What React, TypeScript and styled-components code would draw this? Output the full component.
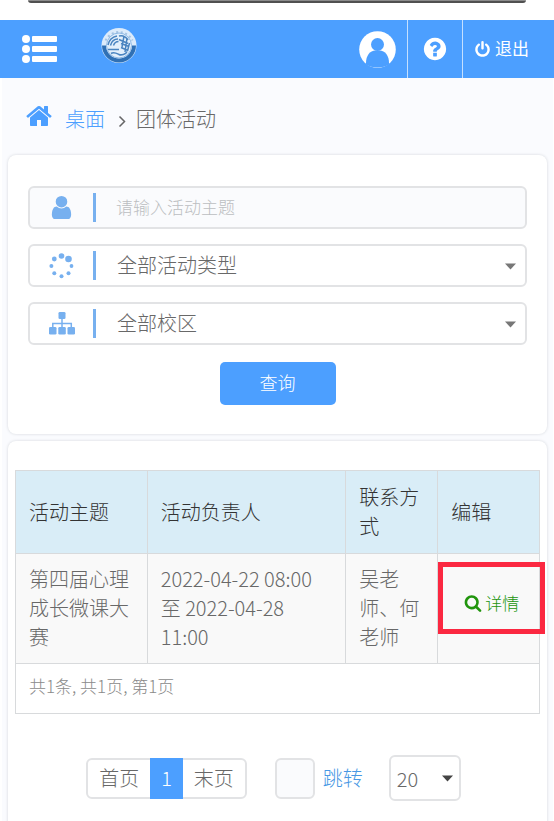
import React from "react";
import styled, { createGlobalStyle, css } from "styled-components";

const blue = "#4c9fff";
const softBlue = "#77b0ef";
const line = "#d8dadc";

const GlobalStyle = createGlobalStyle`
  *, *::before, *::after { box-sizing: border-box; }
  body {
    margin: 0;
    background: #fff;
    color: #686868;
    font-family: "Noto Sans CJK SC", sans-serif;
    font-weight: 300;
    font-size: 20px;
    line-height: 29px;
    overflow-x: hidden;
  }
  button, input, select { font: inherit; color: inherit; margin: 0; }
  a { text-decoration: none; }
`;

const TopStrip = styled.div`
  height: 20px;
  padding: 0 28px;
  &::before {
    content: "";
    display: block;
    height: 3px;
    background: linear-gradient(#8c8c8c 0 33%, #505050 34% 100%);
    border-radius: 0 0 4px 4px;
  }
`;

const Header = styled.header`
  display: flex;
  align-items: stretch;
  height: 58px;
  background: ${blue};
  color: #fff;
`;

const MenuButton = styled.button`
  display: flex;
  align-items: center;
  padding: 0 0 0 22px;
  border: 0;
  background: none;
`;

const Brand = styled.a`
  display: flex;
  align-items: flex-start;
  padding-top: 7px;
  margin: 0 auto 0 44px;
`;

const HeaderLink = styled.a<{ $divided?: boolean; $pad: number }>`
  display: flex;
  align-items: center;
  gap: 4px;
  padding: 0 ${(p) => p.$pad}px;
  color: #fff;
  font-size: 17px;
  ${(p) => p.$divided && css`border-left: 1px solid #c5e0ff;`}
`;

const LogoutText = styled.span`
  padding: 0 14px 3px 0;
  font-weight: 400;
`;

const Main = styled.main`
  margin: 0 1px 0 2px;
  padding: 0 6px;
  background: #fafbfe;
`;

const Breadcrumb = styled.nav`
  display: flex;
  align-items: center;
  height: 77px;
  padding: 4px 19px 0 18px;
  a { display: flex; align-items: center; color: ${blue}; }
  a:first-child { margin: 0 11px 6px 0; }
  svg.chevron { margin: 6px 10px 0 13px; }
`;

const Card = styled.section`
  background: #fff;
  border-radius: 8px;
  box-shadow: 0 0 3px rgba(60, 70, 80, 0.2);
  margin-bottom: 7px;
`;

const SearchForm = styled.form`
  display: flex;
  flex-direction: column;
  gap: 15px;
  padding: 31px 20px 29px;
`;

const Field = styled.label<{ $tinted?: boolean }>`
  position: relative;
  display: flex;
  align-items: center;
  height: 43px;
  border: 2px solid #e2e3e5;
  border-radius: 6px;
  background: ${(p) => (p.$tinted ? "#fafbfd" : "#fff")};
`;

const FieldIcon = styled.span`
  display: flex;
  justify-content: center;
  width: 66px;
  height: 29px;
  align-items: center;
  border-right: 3px solid ${softBlue};
  color: ${softBlue};
  flex: none;
`;

const control = css`
  flex: 1;
  min-width: 0;
  height: 100%;
  border: 0;
  outline: 0;
  background: none;
  appearance: none;
`;

const TextInput = styled.input`
  ${control}
  padding: 0 20px 2px;
  font-size: 17px;
  &::placeholder { color: #bcbec1; opacity: 1; }
`;

const Select = styled.select`
  ${control}
  padding: 0 30px 3px 21px;
`;

const Caret = styled.svg`
  position: absolute;
  right: 8px;
  top: 50%;
  margin-top: -3px;
  pointer-events: none;
`;

const Submit = styled.button`
  align-self: center;
  width: 116px;
  height: 43px;
  margin-top: 2px;
  padding: 0 0 3px;
  border: 0;
  border-radius: 5px;
  background: ${blue};
  color: #fff;
  font-size: 18px;
`;

const ResultCard = styled(Card)`
  padding: 29px 7px 40px;
  margin-bottom: 0;
  border-radius: 8px 8px 0 0;
`;

const Table = styled.table`
  width: 100%;
  table-layout: fixed;
  border-collapse: collapse;
  border: 1px solid ${line};
  th, td { border: 1px solid ${line}; text-align: left; font-weight: 300; }
  th { padding: 11px 13px 13px; background: #d9edf7; color: #333; }
  tbody td { padding: 10px 13px 12px; background: #f9f9f9; }
  tfoot td { padding: 7px 13px 13px; font-size: 17px; color: #8a8a8a; }
`;

const Col = styled.col<{ $share: number }>`
  width: ${(p) => p.$share}%;
`;

const ActionCell = styled.td`
  position: relative;
  &&& { padding: 10px 12px 22px 26px; }
`;

const DetailLink = styled.a`
  display: flex;
  align-items: center;
  gap: 3px;
  color: #21950d;
  font-size: 17px;
  white-space: nowrap;
`;

const Highlight = styled.span`
  position: absolute;
  inset: 8px -6px 29px 0;
  border: 5px solid #fb2841;
  pointer-events: none;
`;

const Pagination = styled.nav`
  display: flex;
  align-items: center;
  justify-content: center;
  height: 46px;
  margin-top: 41px;
  padding-right: 8px;
`;

const Pages = styled.div`
  display: flex;
  height: 41px;
  border: 2px solid #e2e3e5;
  border-radius: 6px;
`;

const PageButton = styled.button<{ $active?: boolean }>`
  padding: 0 11px 2px;
  border: 0;
  background: none;
  ${(p) => p.$active && css`
    margin: -2px 0;
    background: ${blue};
    color: #fff;
  `}
`;

const PageInput = styled.input`
  width: 40px;
  height: 41px;
  margin: 0 8px 0 28px;
  border: 2px solid #e2e3e5;
  border-radius: 6px;
  background: #fafbfd;
`;

const Jump = styled.button`
  padding: 0 0 2px;
  border: 0;
  background: none;
  color: #4898e4;
`;

const SizePicker = styled.label`
  position: relative;
  display: flex;
  width: 72px;
  height: 46px;
  margin-left: 26px;
  border: 2px solid #e2e3e5;
  border-radius: 6px;
  select { padding: 0 0 0 6px; width: 100%; }
  svg { right: 5px; }
`;

const Glyph = ({ d, size }: { d: string; size: number }) => (
  <svg width={size} height={size} viewBox="0 0 1792 1792" fill="currentColor" aria-hidden="true">
    <path d={d} />
  </svg>
);

const homePath =
  "M1408 992v480q0 26-19 45t-45 19h-384v-384h-256v384h-384q-26 0-45-19t-19-45v-480q0-1 .5-3t.5-3l575-474 575 474q1 2 1 6zm223-69l-62 74q-8 9-21 11h-3q-13 0-21-7l-692-577-692 577q-12 8-24 7-13-2-21-11l-62-74q-8-10-7-23.5t11-21.5l719-599q32-26 76-26t76 26l244 204v-195q0-14 9-23t23-9h192q14 0 23 9t9 23v408l219 182q10 8 11 21.5t-7 23.5z";
const questionPath =
  "M1024 1376v-192q0-14-9-23t-23-9h-192q-14 0-23 9t-9 23v192q0 14 9 23t23 9h192q14 0 23-9t9-23zm256-672q0-88-55.5-163t-138.5-116-170-41q-243 0-371 213-15 24 8 42l132 100q7 6 19 6 16 0 25-12 53-68 86-92 34-24 86-24 48 0 85.5 26t37.5 59q0 38-20 61t-68 45q-63 28-115.5 86.5t-52.5 125.5v36q0 14 9 23t23 9h192q14 0 23-9t9-23q0-19 21.5-49.5t54.5-49.5q32-18 49-28.5t46-35 44.5-48 28-60.5 12.5-81zm384 192q0 209-103 385.5t-279.5 279.5-385.5 103-385.5-103-279.5-279.5-103-385.5 103-385.5 279.5-279.5 385.5-103 385.5 103 279.5 279.5 103 385.5z";
const powerPath =
  "M1664 896q0 156-61 298t-164 245-245 164-298 61-298-61-245-164-164-245-61-298q0-182 80.5-343t226.5-270q43-32 95.5-25t83.5 50q32 42 24.5 94.5t-49.5 84.5q-98 74-151.5 181t-53.5 228q0 104 40.5 198.5t109.5 163.5 163.5 109.5 198.5 40.5 198.5-40.5 163.5-109.5 109.5-163.5 40.5-198.5q0-121-53.5-228t-151.5-181q-42-32-49.5-84.5t24.5-94.5q31-43 84-50t95 25q146 109 226.5 270t80.5 343zm-640-768v640q0 52-38 90t-90 38-90-38-38-90v-640q0-52 38-90t90-38 90 38 38 90z";
const searchPath =
  "M1216 832q0-185-131.5-316.5t-316.5-131.5-316.5 131.5-131.5 316.5 131.5 316.5 316.5 131.5 316.5-131.5 131.5-316.5zm512 832q0 52-38 90t-90 38q-54 0-90-38l-343-342q-179 124-399 124-143 0-273.5-55.5t-225-150-150-225-55.5-273.5 55.5-273.5 150-225 225-150 273.5-55.5 273.5 55.5 225 150 150 225 55.5 273.5q0 220-124 399l343 343q37 37 37 90z";
const userPath =
  "M1536 1399q0 109-62.5 187t-150.5 78h-854q-88 0-150.5-78t-62.5-187q0-85 8.5-160.5t31.5-152 58.5-131 94-89 134.5-34.5q131 128 313 128t313-128q76 0 134.5 34.5t94 89 58.5 131 31.5 152 8.5 160.5zm-256-887q0 159-112.5 271.5t-271.5 112.5-271.5-112.5-112.5-271.5 112.5-271.5 271.5-112.5 271.5 112.5 112.5 271.5z";

const ListIcon = () => (
  <svg width="35" height="28" viewBox="0 0 35 28" fill="#fff" aria-hidden="true">
    {[4, 14, 24].map((y) => (
      <g key={y}>
        <circle cx="4" cy={y} r="4" />
        <rect x="10" y={y - 3} width="25" height="6" rx="1" />
      </g>
    ))}
  </svg>
);

const Emblem = () => (
  <svg width="36" height="37" viewBox="0 0 36 37" aria-hidden="true">
    <circle cx="18" cy="18.500" r="17.500" fill="#dcebfb" />
    <path d="M1 18.500a17 17 0 0 0 34 0h-4a13 13 0 0 1-26 0z" fill="#2f70b5" />
    <path d="M4.500 13.500a15 15 0 0 1 27 0" fill="none" stroke="#a5c3e2" strokeWidth="2" strokeDasharray="2 2.600" />
    <circle cx="18" cy="18.500" r="12.500" fill="#e3effb" stroke="#8db8e4" strokeWidth="1" />
    <g fill="none" stroke="#4a84c0">
      <path d="M7 18c1-5 4-8 9-9M9.500 18.500c1-4 4-6.500 7.500-6.500M12.500 18.500c1-3 3-4 5-4" strokeWidth="1.500" />
      <path d="M7 22.500h11M10 26.500c3-2 6 0 8 1s7 0 8-3" strokeWidth="1.600" />
      <path d="M18 9c4-1 7 1 9 4M18 12.500l9 4M20 16.500l8 3M20 20.500l7 3M23 9l-2 11M26 11l-2 14M28.500 16l-2 8" strokeWidth="1.500" />
    </g>
  </svg>
);

const Avatar = () => (
  <svg width="37" height="37" viewBox="0 0 37 37" aria-hidden="true">
    <circle cx="18.500" cy="18.500" r="18.300" fill="#fff" />
    <circle cx="18.500" cy="13.500" r="6.500" fill={blue} />
    <path d="M7 33.500c-.5-8 3.500-14 9.500-14h4c6 0 10 6 9.500 14-5.500 4-17.500 4-23 0z" fill={blue} />
  </svg>
);

const SpinnerIcon = () => (
  <svg width="25" height="26" viewBox="0 0 25 26" fill="currentColor" aria-hidden="true">
    <circle cx="12.500" cy="3" r="2.800" />
    <circle cx="19.500" cy="6" r="3.300" />
    <circle cx="22.500" cy="13" r="1.900" />
    <circle cx="19.500" cy="20.200" r="2" />
    <circle cx="12.500" cy="23.300" r="2" />
    <circle cx="5.300" cy="20.200" r="2" />
    <circle cx="2.400" cy="13" r="2" />
    <circle cx="5.300" cy="6" r="2.400" />
  </svg>
);

const SitemapIcon = () => (
  <svg width="26" height="23" viewBox="0 0 26 23" fill="currentColor" aria-hidden="true">
    <rect x="9.500" width="7" height="7" rx="1.300" />
    <rect y="15" width="7.500" height="7.500" rx="1.300" />
    <rect x="9.300" y="15" width="7.500" height="7.500" rx="1.300" />
    <rect x="18.500" y="15" width="7.500" height="7.500" rx="1.300" />
    <path d="M13 6v10M3.800 16v-4.500h18.500V16" fill="none" stroke="currentColor" strokeWidth="1.500" />
  </svg>
);

const DownCaret = ({ color }: { color: string }) => (
  <Caret width="13" height="7" viewBox="0 0 13 7" fill={color} aria-hidden="true">
    <path d="M1 .5h11L6.500 6.500z" />
  </Caret>
);

const columns = [
  { name: "活动主题", weight: 132 },
  { name: "活动负责人", weight: 199 },
  { name: "联系方式", weight: 92 },
  { name: "编辑", weight: 102 },
];
const totalWeight = columns.reduce((sum, c) => sum + c.weight, 0);

export default function App() {
  return (
    <>
      <GlobalStyle />
      <TopStrip />
      <Header>
        <MenuButton type="button" aria-label="菜单"><ListIcon /></MenuButton>
        <Brand href="#" aria-label="首页"><Emblem /></Brand>
        <HeaderLink href="#" $pad={11} aria-label="个人中心"><Avatar /></HeaderLink>
        <HeaderLink href="#" $divided $pad={14} aria-label="帮助"><Glyph d={questionPath} size={26} /></HeaderLink>
        <HeaderLink href="#" $divided $pad={11}>
          <Glyph d={powerPath} size={17} />
          <LogoutText>退出</LogoutText>
        </HeaderLink>
      </Header>
      <Main>
        <Breadcrumb aria-label="位置">
          <a href="#" aria-label="主页"><Glyph d={homePath} size={28} /></a>
          <a href="#">桌面</a>
          <svg className="chevron" width="8" height="13" viewBox="0 0 8 13" fill="none" stroke="#666" strokeWidth="1.500" aria-hidden="true">
            <path d="M1.500 1.500l5 5-5 5" />
          </svg>
          <span>团体活动</span>
        </Breadcrumb>
        <Card>
          <SearchForm onSubmit={(e) => e.preventDefault()}>
            <Field $tinted>
              <FieldIcon><Glyph d={userPath} size={27} /></FieldIcon>
              <TextInput aria-label="活动主题" placeholder="请输入活动主题" />
            </Field>
            <Field>
              <FieldIcon><SpinnerIcon /></FieldIcon>
              <Select aria-label="活动类型"><option>全部活动类型</option></Select>
              <DownCaret color="#777" />
            </Field>
            <Field>
              <FieldIcon><SitemapIcon /></FieldIcon>
              <Select aria-label="校区"><option>全部校区</option></Select>
              <DownCaret color="#777" />
            </Field>
            <Submit type="submit">查询</Submit>
          </SearchForm>
        </Card>
        <ResultCard>
          <Table>
            <colgroup>{columns.map((c) => <Col key={c.name} $share={(c.weight / totalWeight) * 100} />)}</colgroup>
            <thead>
              <tr>{columns.map((c) => <th key={c.name} scope="col">{c.name}</th>)}</tr>
            </thead>
            <tbody>
              <tr>
                <td>第四届心理成长微课大赛</td>
                <td>2022-04-22 08:00 至 2022-04-28 11:00</td>
                <td>吴老师、何老师</td>
                <ActionCell>
                  <DetailLink href="#"><Glyph d={searchPath} size={18} />详情</DetailLink>
                  <Highlight />
                </ActionCell>
              </tr>
            </tbody>
            <tfoot>
              <tr><td colSpan={4}>共1条, 共1页, 第1页</td></tr>
            </tfoot>
          </Table>
          <Pagination aria-label="分页">
            <Pages>
              <PageButton type="button">首页</PageButton>
              <PageButton type="button" $active aria-current="page">1</PageButton>
              <PageButton type="button">末页</PageButton>
            </Pages>
            <PageInput aria-label="页码" />
            <Jump type="button">跳转</Jump>
            <SizePicker>
              <Select aria-label="每页条数"><option>20</option></Select>
              <DownCaret color="#444" />
            </SizePicker>
          </Pagination>
        </ResultCard>
      </Main>
    </>
  );
}
